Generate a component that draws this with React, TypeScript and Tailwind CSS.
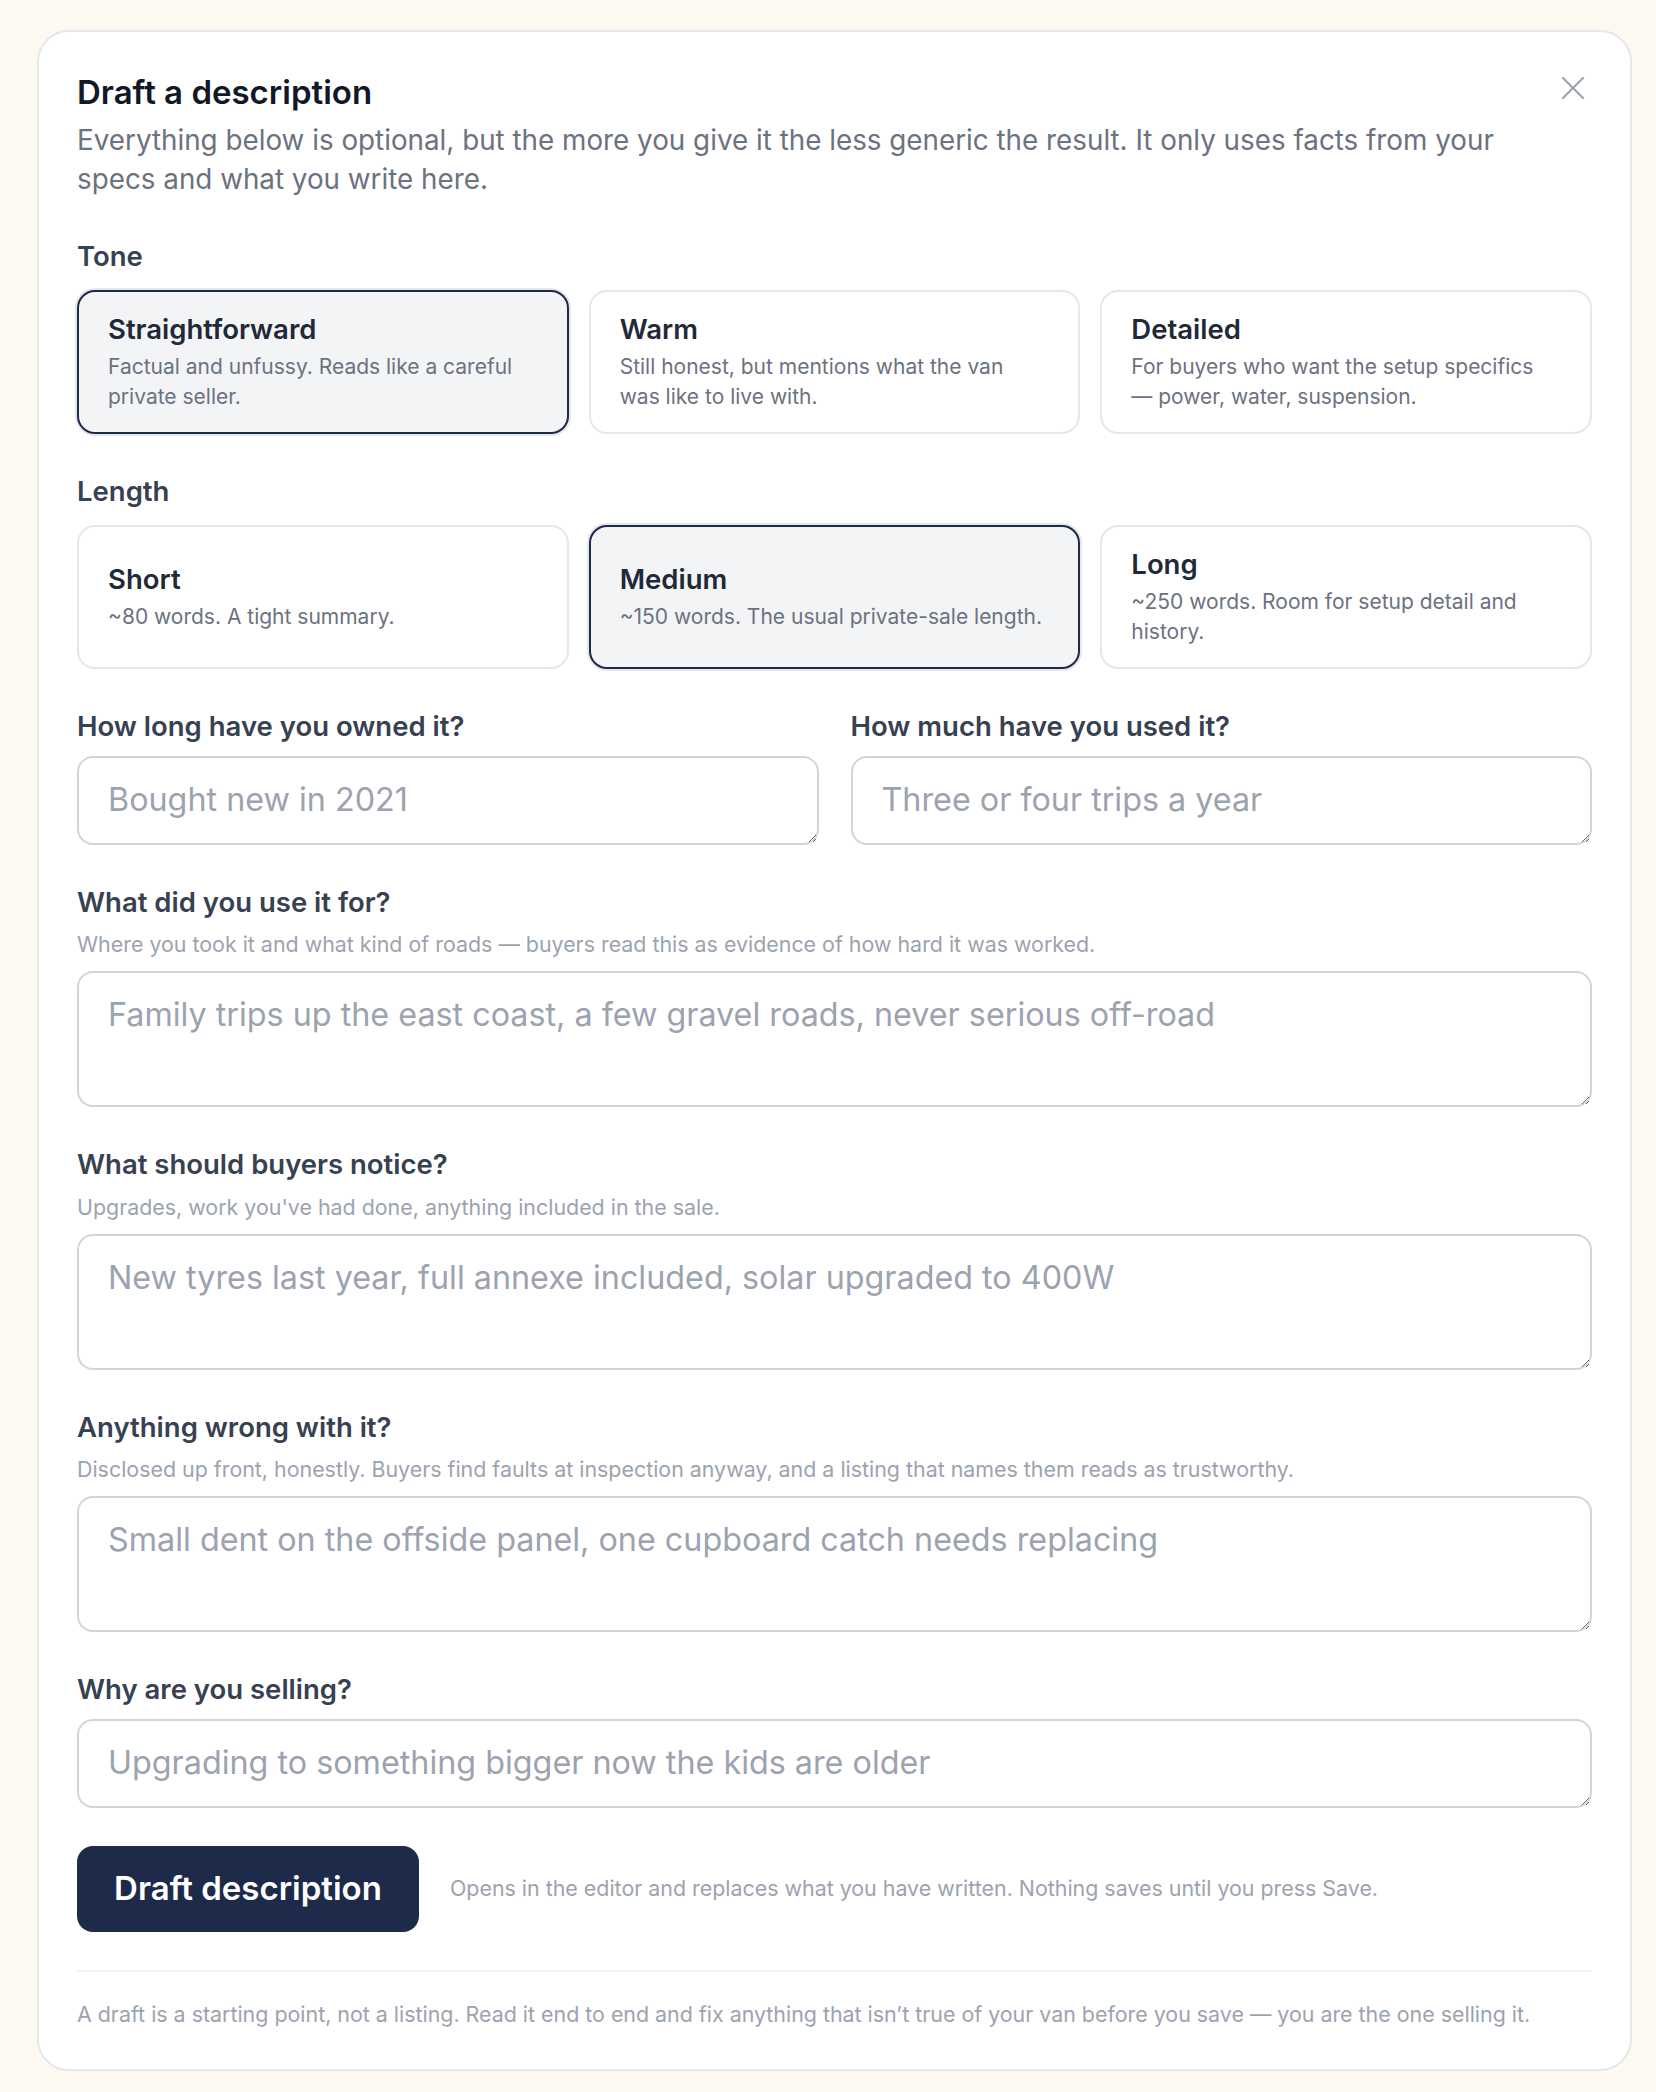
import React, { useState } from "react";

type Option = { id: string; title: string; body: string };

const tones: Option[] = [
  { id: "straight", title: "Straightforward", body: "Factual and unfussy. Reads like a careful private seller." },
  { id: "warm", title: "Warm", body: "Still honest, but mentions what the van was like to live with." },
  { id: "detailed", title: "Detailed", body: "For buyers who want the setup specifics — power, water, suspension." },
];

const lengths: Option[] = [
  { id: "short", title: "Short", body: "~80 words. A tight summary." },
  { id: "medium", title: "Medium", body: "~150 words. The usual private-sale length." },
  { id: "long", title: "Long", body: "~250 words. Room for setup detail and history." },
];

const OptionGroup = ({
  label,
  options,
  value,
  onChange,
}: {
  label: string;
  options: Option[];
  value: string;
  onChange: (id: string) => void;
}) => (
  <div>
    <div className="text-[27.5px] leading-[34px] font-semibold text-[#374151] mb-[17px]">{label}</div>
    <div className="grid grid-cols-3 gap-[20px]">
      {options.map((o) => {
        const active = o.id === value;
        return (
          <button
            key={o.id}
            type="button"
            onClick={() => onChange(o.id)}
            className={
              "flex flex-col justify-center text-left rounded-[18px] border-2 pl-[29px] pr-[36px] py-[19px] min-h-[144px] " +
              (active
                ? "border-[#1e2a4a] bg-[#f3f4f6] shadow-[0_0_0_2px_#e5e7eb]"
                : "border-[#e5e7eb] bg-white")
            }
          >
            <span className="text-[27.5px] leading-[34px] font-semibold text-[#1f2937]">{o.title}</span>
            <span className="mt-[6px] text-[21px] leading-[30px] text-[#6b7280]">{o.body}</span>
          </button>
        );
      })}
    </div>
  </div>
);

const Field = ({
  label,
  hint,
  placeholder,
  tall,
}: {
  label: string;
  hint?: string;
  placeholder: string;
  tall?: boolean;
}) => (
  <div className="flex flex-col">
    <label className="text-[27.5px] leading-[34px] font-semibold text-[#374151]">{label}</label>
    {hint && <p className="mt-[11.5px] text-[21.4px] leading-[28px] text-[#9ca3af]">{hint}</p>}
    <textarea
      rows={1}
      placeholder={placeholder}
      className={
        "mt-[13px] w-full rounded-[16px] border-2 border-[#d1d5db] bg-white px-[29px] py-[21px] text-[32.3px] leading-[42px] text-[#111827] placeholder:text-[#9ca3af] outline-none " +
        (tall ? "h-[136px]" : "h-[88.5px]")
      }
    />
  </div>
);

export default function App() {
  const [tone, setTone] = useState("straight");
  const [length, setLength] = useState("medium");

  return (
    <div
      className="min-h-screen bg-[#fdf8f0] pt-[30px] pb-[24px] pl-[37px] pr-[24px]"
      style={{ fontFamily: "Inter, 'Noto Sans', sans-serif" }}
    >
      <div className="w-[1595px] rounded-[32px] border-2 border-[#e5e7eb] bg-white px-[38px] pt-[38px] pb-[41px]">
        {/* header */}
        <div className="flex items-start justify-between">
          <h1 className="text-[33px] leading-[44px] font-semibold text-[#111827]">Draft a description</h1>
          <button type="button" className="mt-[2px] mr-[3px] p-[4px] text-[#9ca3af]" aria-label="Close">
            <svg width="24" height="24" viewBox="0 0 24 24" fill="none" stroke="currentColor" strokeWidth="2.2" strokeLinecap="round">
              <path d="M2 2 22 22" />
              <path d="M22 2 2 22" />
            </svg>
          </button>
        </div>
        <p className="mt-[7px] pr-[60px] text-[27.8px] leading-[39px] text-[#6b7280]">
          Everything below is optional, but the more you give it the less generic the result. It only uses facts from your
          specs and what you write here.
        </p>

        <div className="mt-[40px] flex flex-col gap-[40px]">
          <OptionGroup label="Tone" options={tones} value={tone} onChange={setTone} />
          <OptionGroup label="Length" options={lengths} value={length} onChange={setLength} />

          <div className="grid grid-cols-2 gap-[32px]">
            <Field label="How long have you owned it?" placeholder="Bought new in 2021" />
            <Field label="How much have you used it?" placeholder="Three or four trips a year" />
          </div>

          <Field
            label="What did you use it for?"
            hint="Where you took it and what kind of roads — buyers read this as evidence of how hard it was worked."
            placeholder="Family trips up the east coast, a few gravel roads, never serious off-road"
            tall
          />
          <Field
            label="What should buyers notice?"
            hint="Upgrades, work you've had done, anything included in the sale."
            placeholder="New tyres last year, full annexe included, solar upgraded to 400W"
            tall
          />
          <Field
            label="Anything wrong with it?"
            hint="Disclosed up front, honestly. Buyers find faults at inspection anyway, and a listing that names them reads as trustworthy."
            placeholder="Small dent on the offside panel, one cupboard catch needs replacing"
            tall
          />
          <Field label="Why are you selling?" placeholder="Upgrading to something bigger now the kids are older" />
        </div>

        <div className="mt-[38px] flex items-center gap-[31px]">
          <button
            type="button"
            className="h-[86px] w-[342px] rounded-[16px] bg-[#1e2a4a] text-[33px] font-semibold text-white"
          >
            Draft description
          </button>
          <span className="text-[21.4px] text-[#9ca3af]">
            Opens in the editor and replaces what you have written. Nothing saves until you press Save.
          </span>
        </div>

        <div className="mt-[38px] border-t-2 border-[#f3f4f6] pt-[28px]">
          <p className="text-[21.4px] leading-[28px] text-[#9ca3af]">
            A draft is a starting point, not a listing. Read it end to end and fix anything that isn’t true of your van
            before you save — you are the one selling it.
          </p>
        </div>
      </div>
    </div>
  );
}
